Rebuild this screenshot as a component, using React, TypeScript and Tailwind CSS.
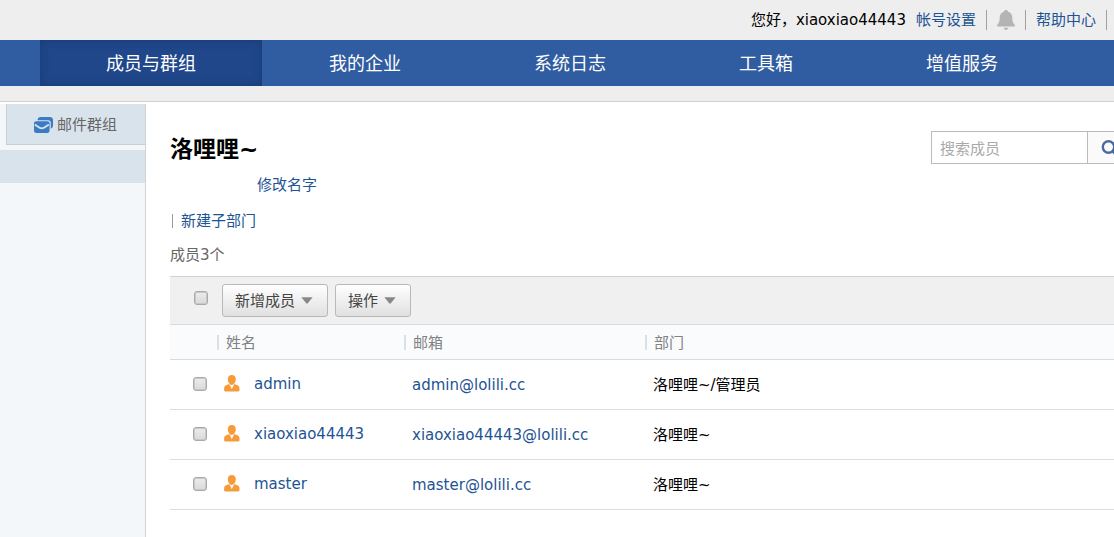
import React from 'react';

const navItems = ['成员与群组', '我的企业', '系统日志', '工具箱', '增值服务'];

const members = [
  { name: 'admin', email: 'admin@lolili.cc', department: '洛哩哩~/管理员' },
  { name: 'xiaoxiao44443', email: 'xiaoxiao44443@lolili.cc', department: '洛哩哩~' },
  { name: 'master', email: 'master@lolili.cc', department: '洛哩哩~' },
];

function BellIcon() {
  return (
    <svg width="18" height="20" viewBox="0 0 18 20" fill="#b4b4b4" aria-hidden="true">
      <path d="M9 0c1 0 1.700.6 1.900 1.400C13.700 2.200 15.300 4.600 15.300 7.500c0 3.800.7 5.600 2.400 7.200.6.600.2 1.700-.7 1.700H1c-.9 0-1.300-1.100-.7-1.700 1.700-1.600 2.400-3.400 2.400-7.200 0-2.900 1.600-5.300 4.400-6.100C7.300.6 8 0 9 0z" />
      <path d="M6.700 17.700h4.600c-.2 1.300-1.100 2.200-2.300 2.200s-2.100-.9-2.300-2.200z" />
    </svg>
  );
}

function MailGroupIcon() {
  return (
    <svg width="19" height="16" viewBox="0 0 19 16" aria-hidden="true">
      <path
        d="M3.500 3.200C3.700 1 4.800 0 7 0h8.500C17.800 0 19 1.100 19 3.300v4.700c0 2-.7 3.200-2.200 3.600V5.900c0-1.800-.9-2.700-2.700-2.700z"
        fill="#3b7bc3"
      />
      <path
        d="M0 6.500C0 5 .9 4.200 2.400 4.200h10.700c1.600 0 2.500.8 2.500 2.300v7c0 1.600-.9 2.500-2.500 2.500H2.400C.9 16 0 15.100 0 13.500z"
        fill="#3b7bc3"
      />
      <path d="M.8 7.600c2.500 1.300 4.600 3.700 7 3.700s4.500-2.400 7-3.700" fill="none" stroke="#dae3eb" strokeWidth="1.800" />
    </svg>
  );
}

function PersonIcon() {
  return (
    <svg width="16" height="17" viewBox="0 0 16 17" fill="#f79b3a" aria-hidden="true">
      <path d="M7.800 0c2.600 0 4 1.700 4 4.100 0 2.900-1.700 6-4 6s-4-3.100-4-6C3.800 1.700 5.200 0 7.800 0z" />
      <path d="M5 8.800 6.200 10.800l1.600 3.400 1.600-3.400 1.200-2c.5.800 1.200 1 2.200 1.300 1.800.5 2.700 1.700 2.700 3.600v1.500c0 .8-.5 1.200-1.300 1.200H1.400c-.8 0-1.300-.4-1.300-1.200v-1.500c0-1.900.9-3.100 2.700-3.600 1-.3 1.700-.5 2.200-1.300z" />
    </svg>
  );
}

function SearchIcon() {
  return (
    <svg width="17" height="17" viewBox="0 0 17 17" fill="none" stroke="#4a6a9f" aria-hidden="true">
      <circle cx="7.500" cy="7" r="5.700" strokeWidth="2.400" />
      <path d="m11.500 11 4.500 4.500" strokeWidth="2.800" />
    </svg>
  );
}

function Caret() {
  return (
    <svg width="12" height="7" viewBox="0 0 12 7" fill="#888" aria-hidden="true">
      <path d="M.3.300h11.400L6.800 6.200c-.5.600-1.100.6-1.600 0z" />
    </svg>
  );
}

function Check({ label }: { label: string }) {
  return (
    <input
      type="checkbox"
      aria-label={label}
      className="block size-3.5 appearance-none rounded-[3px] border border-[#a9a9a9] bg-linear-to-b from-[#ececec] to-[#d9d9d9] shadow-[inset_0_0_0_1px_#c8c8c8] checked:from-[#8fb2e0] checked:to-[#5f8fce]"
    />
  );
}

function MenuButton({ children }: { children: React.ReactNode }) {
  return (
    <button
      type="button"
      className="flex h-[33px] items-center gap-1.5 rounded-[3px] border border-[#b9b9b9] bg-linear-to-b from-white to-[#e0e0e0] pr-3.5 pl-3 text-[#444]"
    >
      {children}
      <Caret />
    </button>
  );
}

function HeadCell({ children }: { children: React.ReactNode }) {
  return (
    <th scope="col" className="p-0 text-left font-normal text-[#828282]">
      <div className="flex items-center gap-[7px] pt-px">
        <span className="h-[15px] w-0.5 bg-[#dcdfe3]" />
        {children}
      </div>
    </th>
  );
}

function Divider() {
  return <span className="h-5 w-px bg-[#a0a0a0]" />;
}

export default function App() {
  return (
    <div className="flex min-h-screen flex-col overflow-x-hidden bg-white font-['DejaVu_Sans','Noto_Sans_CJK_SC',sans-serif] text-[15px] leading-5 text-black">
      <header>
        <div className="flex h-10 items-center justify-end gap-2.5 bg-[#eee] pr-[7px]">
          <span>您好，xiaoxiao44443</span>
          <a href="#account" className="text-[#1e5494]">帐号设置</a>
          <Divider />
          <button type="button" aria-label="通知">
            <BellIcon />
          </button>
          <Divider />
          <a href="#help" className="text-[#1e5494]">帮助中心</a>
          <Divider />
        </div>
        <nav className="flex h-[46px] gap-px bg-[#305ca1] pl-10 text-lg text-white">
          {navItems.map((item, i) => (
            <a
              key={item}
              href="#nav"
              className={
                i === 0
                  ? 'flex shrink-0 items-center bg-[#1f478a] px-[66px] pt-0.5 shadow-[inset_0_0_8px_#183a72]'
                  : 'flex shrink-0 items-center px-[66px] pt-0.5'
              }
            >
              {item}
            </a>
          ))}
        </nav>
        <div className="h-4 border-b border-[#d0d0d0] bg-[#eee]" />
      </header>

      <div className="flex flex-1 pt-0.5">
        <aside className="w-[146px] shrink-0 border-r border-[#d0d3d6] bg-[#f3f7fa]">
          <a
            href="#groups"
            className="ml-1.5 flex h-[41px] items-center gap-1 border-b border-l border-[#cbced1] bg-[#d9e3eb] pt-0.5 pl-[27px] text-[#666]"
          >
            <MailGroupIcon />
            邮件群组
          </a>
          <div className="mt-[5px] h-[33px] bg-[#d9e3eb]" />
        </aside>

        <main className="min-w-0 flex-1 pl-6">
          <div className="flex justify-between pt-[27px]">
            <h1 className="pt-1.5 text-[23px] leading-6 font-bold">洛哩哩~</h1>
            <form className="-mr-3 flex h-[33px] border border-[#bbb]" onSubmit={(e) => e.preventDefault()}>
              <input
                type="text"
                aria-label="搜索成员"
                placeholder="搜索成员"
                className="w-[155px] px-2 pt-0.5 outline-none placeholder:text-[#aaa]"
              />
              <button
                type="submit"
                aria-label="搜索"
                className="flex w-[38px] items-center border-l border-[#bbb] bg-[#fafafa] pt-0.5 pl-[13px]"
              >
                <SearchIcon />
              </button>
            </form>
          </div>
          <div className="mt-[11px] pl-[87px]">
            <a href="#rename" className="text-[#1e5494]">修改名字</a>
          </div>
          <div className="mt-4 flex items-center gap-2 pl-0.5">
            <span className="h-3.5 w-px bg-[#999]" />
            <a href="#new-department" className="text-[#1e5494]">新建子部门</a>
          </div>
          <p className="mt-3.5 text-[#666]">成员3个</p>

          <div className="mt-[11px] flex h-12 items-center gap-[7px] border-t border-[#d2d2d2] bg-[#f0f0f0] pl-6">
            <div className="mr-[7px] pb-1.5">
              <Check label="全选" />
            </div>
            <MenuButton>新增成员</MenuButton>
            <MenuButton>操作</MenuButton>
          </div>

          <table className="w-full table-fixed border-collapse">
            <colgroup>
              <col className="w-[47px]" />
              <col className="w-[187px]" />
              <col className="w-[241px]" />
              <col />
            </colgroup>
            <thead>
              <tr className="h-[35px] border-y border-[#d8dade] bg-[#f9fbfd]">
                <td />
                <HeadCell>姓名</HeadCell>
                <HeadCell>邮箱</HeadCell>
                <HeadCell>部门</HeadCell>
              </tr>
            </thead>
            <tbody>
              {members.map((m) => (
                <tr key={m.name} className="h-[50px] border-b border-[#ddd]">
                  <td className="p-0 pb-0.5 pl-[23px]">
                    <Check label={m.name} />
                  </td>
                  <td className="p-0 pb-0.5 pl-[7px]">
                    <div className="flex items-center gap-3.5">
                      <PersonIcon />
                      <a href="#member" className="text-[#1e5494]">{m.name}</a>
                    </div>
                  </td>
                  <td className="p-0 pl-2">
                    <a href="#mail" className="text-[#1e5494]">{m.email}</a>
                  </td>
                  <td className="p-0 pl-2">{m.department}</td>
                </tr>
              ))}
            </tbody>
          </table>
        </main>
      </div>
    </div>
  );
}
